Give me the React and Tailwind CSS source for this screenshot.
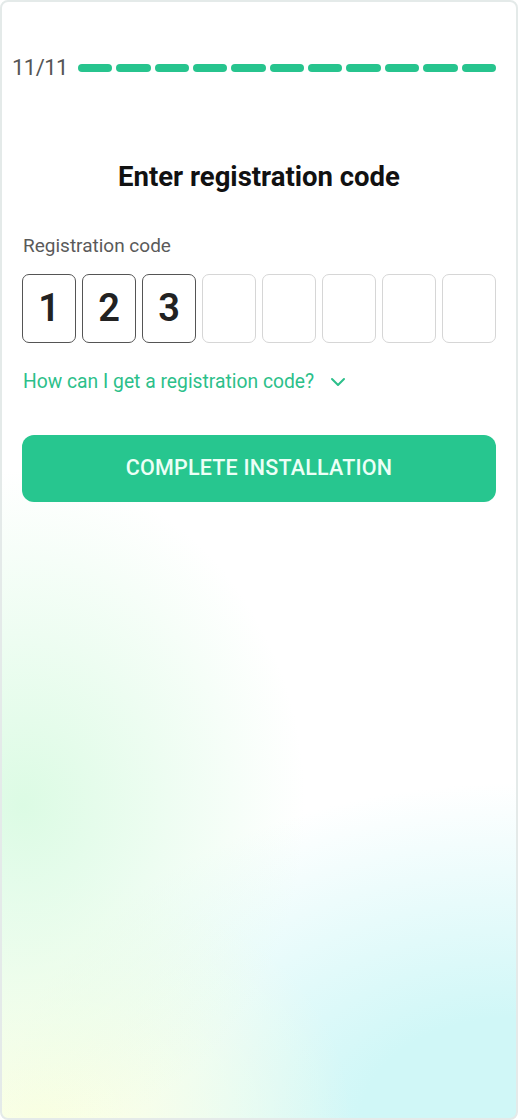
import { ChevronDown } from 'lucide-react';

const DIGITS = ['1', '2', '3', '', '', '', '', ''];

export default function App() {
  return (
    <div className="w-[518px] h-[1120px] font-['Roboto',sans-serif]">
      <div className="h-full rounded-lg border-2 border-[#e4eae9] bg-white bg-[radial-gradient(ellipse_55%_30%_at_4%_72%,#dcfbe4_0%,rgba(220,251,228,0)_100%),radial-gradient(ellipse_60%_22%_at_8%_100%,#fbffe2_0%,rgba(251,255,226,0)_100%),radial-gradient(ellipse_100%_30%_at_100%_100%,#d0f7f7_30%,rgba(208,247,247,0)_100%)] flex flex-col px-5 overflow-hidden">
        {/* progress */}
        <div className="flex items-center mt-[55px] -ml-[10px] gap-[10px]">
          <span className="text-[22px] text-[#555] leading-none tracking-tight">11/11</span>
          <div className="flex-1 flex gap-[4px]">
            {Array.from({ length: 11 }).map((_, i) => (
              <div key={i} className="h-[8px] flex-1 rounded-full bg-[#27c48e]" />
            ))}
          </div>
        </div>

        <h1 className="mt-[84px] text-center text-[27.5px] font-bold text-[#111] leading-none">
          Enter registration code
        </h1>

        <label className="mt-[45px] text-[19px] text-[#5a5a5a] leading-none pl-px">Registration code</label>

        <div className="mt-[19px] grid grid-cols-8 gap-[6px]">
          {DIGITS.map((d, i) => (
            <div
              key={i}
              className={
                d
                  ? 'h-[69px] rounded-[7px] border-[1.5px] border-[#555] flex items-center justify-center text-[38px] font-semibold text-[#222]'
                  : 'h-[69px] rounded-[7px] border-[1.5px] border-[#d6d6d6] bg-white/60'
              }
            >
              {d}
            </div>
          ))}
        </div>

        <button className="mt-[28px] h-[22px] flex items-center gap-[12px] text-[#2cbf8a] text-[19.3px] leading-none self-start pl-px">
          How can I get a registration code?
          <ChevronDown size={24} strokeWidth={2} />
        </button>

        <button className="mt-[42px] h-[67px] rounded-[12px] bg-[#27c68f] text-[#ecfff6] text-[21.5px] font-medium tracking-[0.2px]">
          COMPLETE INSTALLATION
        </button>
      </div>
    </div>
  );
}
